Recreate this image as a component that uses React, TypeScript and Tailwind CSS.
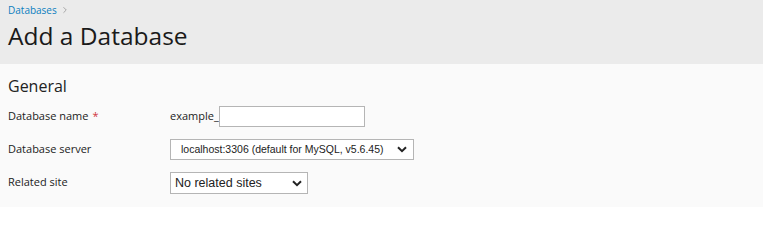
import { ChevronRight } from "lucide-react";

function Chevron() {
  return (
    <svg className="w-[10px] h-[7px]" viewBox="0 0 10 7" fill="none">
      <path d="M1 1.2l4 4 4-4" stroke="#222" strokeWidth={2} />
    </svg>
  );
}

export default function App() {
  return (
    <div className="w-[763px] h-[207px] bg-[#fafafa] text-[#222] overflow-hidden" style={{ fontFamily: '"Open Sans", sans-serif' }}>
      {/* 页头 */}
      <div className="h-[64px] bg-[#ebebeb] px-2 pt-[3px]">
        <div className="flex items-center gap-[3px] text-[10px] leading-[14px]">
          <a className="text-[#0b7fbf]">Databases</a>
          <ChevronRight className="w-[10px] h-[10px] text-[#999]" strokeWidth={2} />
        </div>
        <h1 className="text-[24.5px] leading-[32px] mt-[3px] text-[#1a1a1a]">Add a Database</h1>
      </div>

      {/* 表单 */}
      <div className="px-2 pt-[11px]">
        <h2 className="text-[16px] leading-[22px] font-medium">General</h2>
        <div className="mt-[9px] grid grid-cols-[162px_1fr] gap-y-[12px] text-[11px] items-center">
          <div className="h-[21px] flex items-center">
            Database name <span className="text-[#d0343c] ml-[4px]">*</span>
          </div>
          <div className="flex items-center h-[21px]">
            <span className="text-[11px]">example_</span>
            <input className="w-[146px] h-[21px] border border-[#b5b5b5] bg-white outline-none" />
          </div>

          <div className="h-[21px] flex items-center">Database server</div>
          <div className="h-[21px] flex">
            <div className="w-[244px] h-[21px] border border-[#b5b5b5] bg-white flex items-center justify-between pl-[10px] pr-[6px] text-[10.5px] whitespace-nowrap" style={{ fontFamily: '"Liberation Sans", Arial, sans-serif' }}>
              <span>localhost:3306 (default for MySQL, v5.6.45)</span>
              <Chevron />
            </div>
          </div>

          <div className="h-[21px] flex items-center">Related site</div>
          <div className="h-[21px] flex">
            <div className="w-[138px] h-[22px] border border-[#b5b5b5] bg-white flex items-center justify-between pl-[4px] pr-[5px] text-[12.5px] whitespace-nowrap" style={{ fontFamily: '"Liberation Sans", Arial, sans-serif' }}>
              <span>No related sites</span>
              <Chevron />
            </div>
          </div>
        </div>
      </div>
    </div>
  );
}
